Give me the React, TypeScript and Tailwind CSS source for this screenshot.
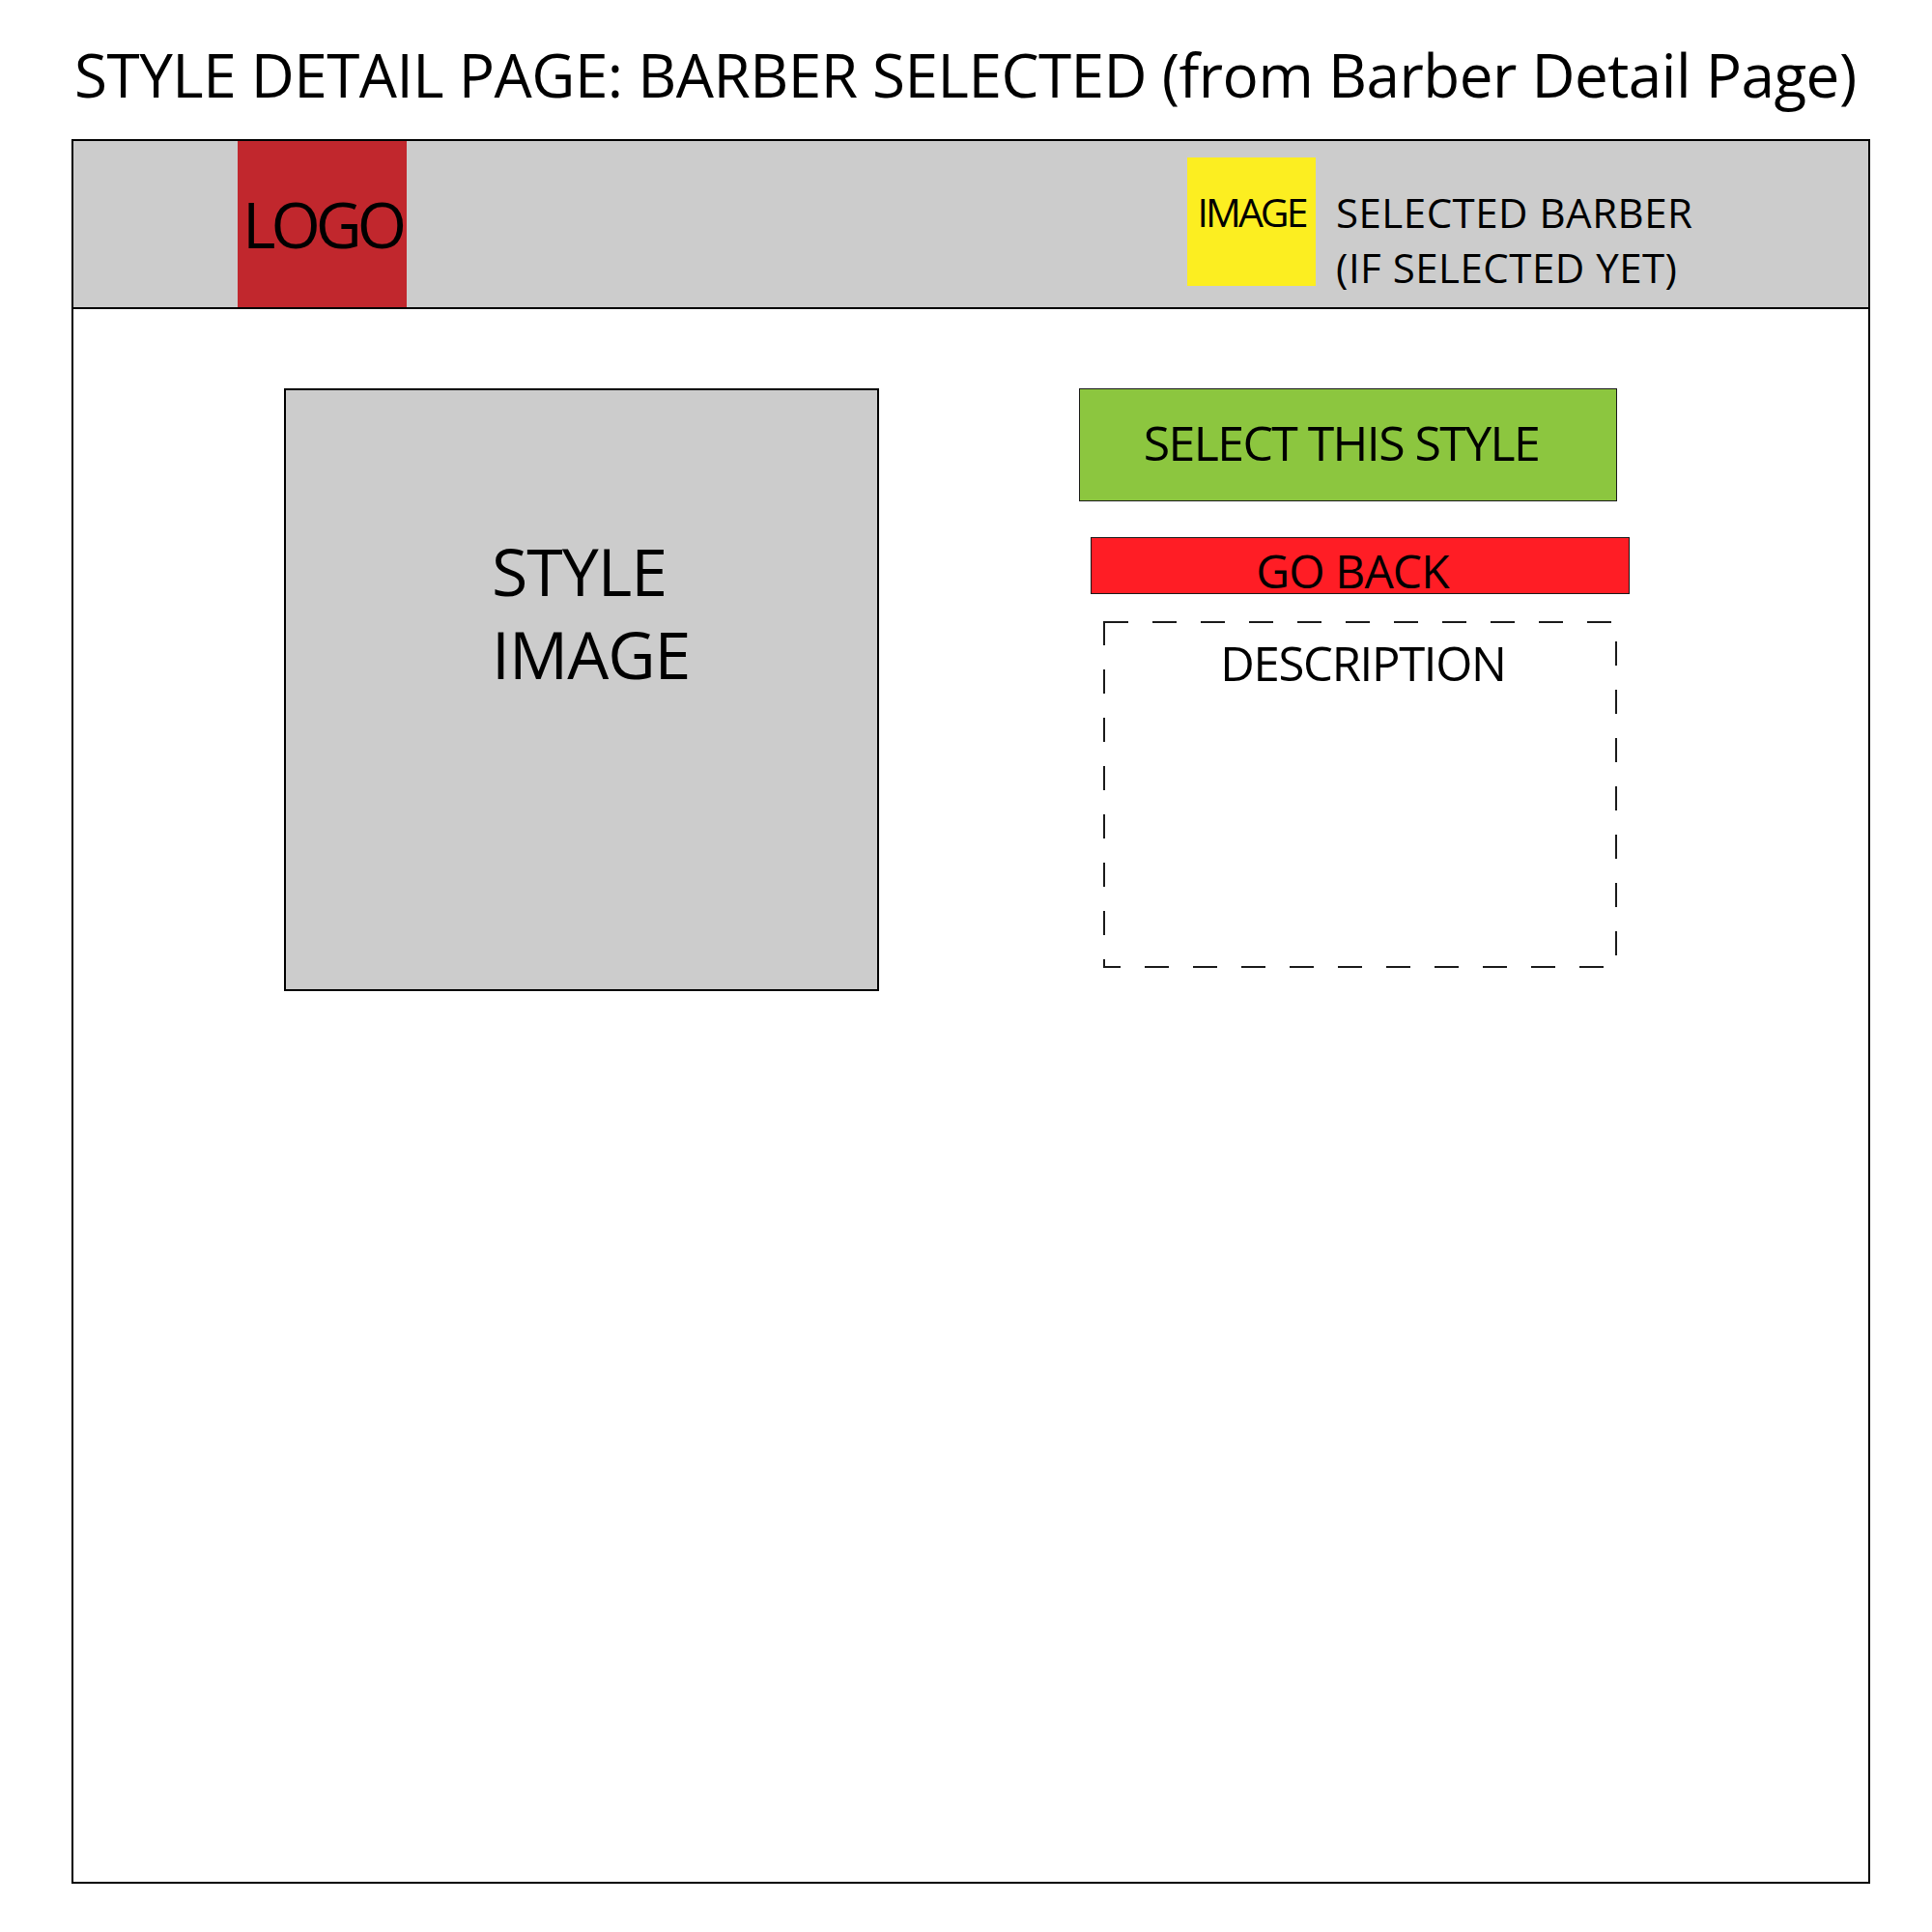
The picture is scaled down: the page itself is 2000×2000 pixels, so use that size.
import React from 'react';

const App = () => {
  return (
    <div className="w-[2000px] h-[2000px] bg-white text-black font-['Open_Sans',sans-serif]">
      {/* page title */}
      <div className="pt-[46px] pl-[77px] text-[62px] leading-none tracking-[-0.5px] whitespace-nowrap">
        STYLE DETAIL PAGE: BARBER SELECTED (from Barber Detail Page)
      </div>

      <div className="mt-[36px] ml-[74px] w-[1862px] h-[1806px] border-2 border-black flex flex-col">
        {/* header bar */}
        <div className="h-[174px] shrink-0 bg-[#cccccc] border-b-2 border-black flex">
          <div className="ml-[170px] w-[175px] bg-[#c1272d] flex items-center justify-center pb-[3px]">
            <span className="text-[66px] leading-none tracking-[-5px]">LOGO</span>
          </div>
          <div className="ml-[808px] mt-[17px] w-[133px] h-[133px] bg-[#fcee21] flex justify-center pt-[36px]">
            <span className="text-[41px] leading-none tracking-[-3px]">IMAGE</span>
          </div>
          <div className="ml-[21px] mt-[45px] text-[42px] leading-[57px] tracking-[0.5px] whitespace-nowrap">
            <div>SELECTED BARBER</div>
            <div>(IF SELECTED YET)</div>
          </div>
        </div>

        {/* body */}
        <div className="flex items-start pt-[82px]">
          <div className="ml-[218px] w-[616px] h-[624px] bg-[#cccccc] border-2 border-black pt-[144px] pl-[213px] text-[68px] leading-[86px] tracking-[-1px]">
            <div>STYLE</div>
            <div>IMAGE</div>
          </div>

          <div className="ml-[207px] flex flex-col">
            <button className="w-[557px] h-[117px] bg-[#8cc63f] border border-[#1a1a1a] flex items-center justify-center pr-[14px] pb-[5px] text-[50px] leading-none tracking-[-1.6px] whitespace-nowrap">
              SELECT THIS STYLE
            </button>
            <button className="ml-[12px] mt-[37px] w-[558px] h-[59px] bg-[#ff1d25] border border-[#1a1a1a] flex items-center justify-center pr-[16px] pt-[11px] text-[48px] leading-none tracking-[-0.9px] whitespace-nowrap">
              GO BACK
            </button>
            <div className="relative ml-[25px] mt-[28px] w-[532px] h-[359px] pt-[19px] pl-[6px] text-center text-[49px] leading-none tracking-[-1.3px]">
              <svg className="absolute inset-0" width="532" height="359" viewBox="0 0 532 359">
                <rect x="1" y="1" width="530" height="357" fill="none" stroke="#1a1a1a" strokeWidth="2" strokeDasharray="25 25" />
              </svg>
              <span className="relative">DESCRIPTION</span>
            </div>
          </div>
        </div>
      </div>
    </div>
  );
};

export default App;
